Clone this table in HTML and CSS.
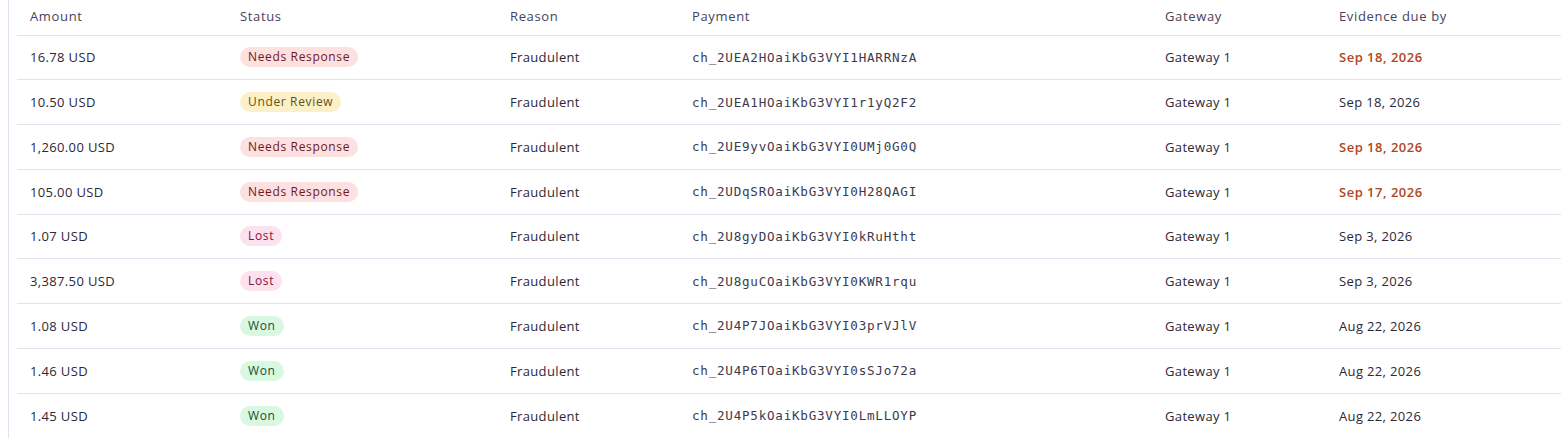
FILE: index.html
```html
<!DOCTYPE html>
<html>
<head>
<meta charset="utf-8">
<link rel="stylesheet" href="styles.css">
</head>
<body>
<div class="frame">
  <div class="table">
    <div class="row head">
      <div class="cell">Amount</div>
      <div class="cell">Status</div>
      <div class="cell">Reason</div>
      <div class="cell">Payment</div>
      <div class="cell">Gateway</div>
      <div class="cell">Evidence due by</div>
    </div>
    <div class="row">
      <div class="cell">16.78 USD</div>
      <div class="cell"><span class="badge needs">Needs Response</span></div>
      <div class="cell">Fraudulent</div>
      <div class="cell mono">ch_2UEA2HOaiKbG3VYI1HARRNzA</div>
      <div class="cell">Gateway 1</div>
      <div class="cell due">Sep 18, 2026</div>
    </div>
    <div class="row">
      <div class="cell">10.50 USD</div>
      <div class="cell"><span class="badge review">Under Review</span></div>
      <div class="cell">Fraudulent</div>
      <div class="cell mono">ch_2UEA1HOaiKbG3VYI1r1yQ2F2</div>
      <div class="cell">Gateway 1</div>
      <div class="cell">Sep 18, 2026</div>
    </div>
    <div class="row">
      <div class="cell">1,260.00 USD</div>
      <div class="cell"><span class="badge needs">Needs Response</span></div>
      <div class="cell">Fraudulent</div>
      <div class="cell mono">ch_2UE9yvOaiKbG3VYI0UMj0G0Q</div>
      <div class="cell">Gateway 1</div>
      <div class="cell due">Sep 18, 2026</div>
    </div>
    <div class="row">
      <div class="cell">105.00 USD</div>
      <div class="cell"><span class="badge needs">Needs Response</span></div>
      <div class="cell">Fraudulent</div>
      <div class="cell mono">ch_2UDqSROaiKbG3VYI0H28QAGI</div>
      <div class="cell">Gateway 1</div>
      <div class="cell due">Sep 17, 2026</div>
    </div>
    <div class="row">
      <div class="cell">1.07 USD</div>
      <div class="cell"><span class="badge lost">Lost</span></div>
      <div class="cell">Fraudulent</div>
      <div class="cell mono">ch_2U8gyDOaiKbG3VYI0kRuHtht</div>
      <div class="cell">Gateway 1</div>
      <div class="cell">Sep 3, 2026</div>
    </div>
    <div class="row">
      <div class="cell">3,387.50 USD</div>
      <div class="cell"><span class="badge lost">Lost</span></div>
      <div class="cell">Fraudulent</div>
      <div class="cell mono">ch_2U8guCOaiKbG3VYI0KWR1rqu</div>
      <div class="cell">Gateway 1</div>
      <div class="cell">Sep 3, 2026</div>
    </div>
    <div class="row">
      <div class="cell">1.08 USD</div>
      <div class="cell"><span class="badge won">Won</span></div>
      <div class="cell">Fraudulent</div>
      <div class="cell mono">ch_2U4P7JOaiKbG3VYI03prVJlV</div>
      <div class="cell">Gateway 1</div>
      <div class="cell">Aug 22, 2026</div>
    </div>
    <div class="row">
      <div class="cell">1.46 USD</div>
      <div class="cell"><span class="badge won">Won</span></div>
      <div class="cell">Fraudulent</div>
      <div class="cell mono">ch_2U4P6TOaiKbG3VYI0sSJo72a</div>
      <div class="cell">Gateway 1</div>
      <div class="cell">Aug 22, 2026</div>
    </div>
    <div class="row">
      <div class="cell">1.45 USD</div>
      <div class="cell"><span class="badge won">Won</span></div>
      <div class="cell">Fraudulent</div>
      <div class="cell mono">ch_2U4P5kOaiKbG3VYI0LmLLOYP</div>
      <div class="cell">Gateway 1</div>
      <div class="cell">Aug 22, 2026</div>
    </div>
  </div>
</div>
</body>
</html>
```
FILE: styles.css
```css
html, body {
  margin: 0;
  padding: 0;
  background: #ffffff;
}
body {
  font-family: "Open Sans", "Noto Sans", sans-serif;
  font-size: 13px;
  letter-spacing: 0.35px;
  color: #2b2838;
}
.frame {
  margin-left: 8px;
  border-left: 1px solid #e4e2ee;
  padding-left: 8px;
  min-height: 438px;
  box-sizing: border-box;
}
.table {
  display: flex;
  flex-direction: column;
}
.row {
  display: grid;
  grid-template-columns: 210px 270px 182px 473px 174px 1fr;
  height: 44.75px;
  align-items: center;
  border-bottom: 1px solid #e4e2ee;
  box-sizing: border-box;
}
.row:last-child {
  border-bottom: none;
}
.row.head {
  height: 35.5px;
  color: #47425c;
  letter-spacing: 0.65px;
  padding-bottom: 3px;
}
.cell {
  padding-left: 13px;
  white-space: nowrap;
}
.mono {
  font-family: "DejaVu Sans Mono", monospace;
  font-size: 12.6px;
  letter-spacing: 0.75px;
  color: #3d3a4d;
}
.due {
  color: #b0461b;
  font-weight: 600;
  letter-spacing: 0.5px;
}
.badge {
  display: inline-block;
  font-size: 12px;
  font-weight: 500;
  letter-spacing: 0.65px;
  line-height: 20px;
  padding: 0 8px;
  border-radius: 10px;
}
.needs { background: #fde0e0; color: #721818; }
.review { background: #fcf0c8; color: #67500f; }
.lost { background: #fce1ee; color: #84143f; }
.won { background: #d8f8e2; color: #17502d; }
```
